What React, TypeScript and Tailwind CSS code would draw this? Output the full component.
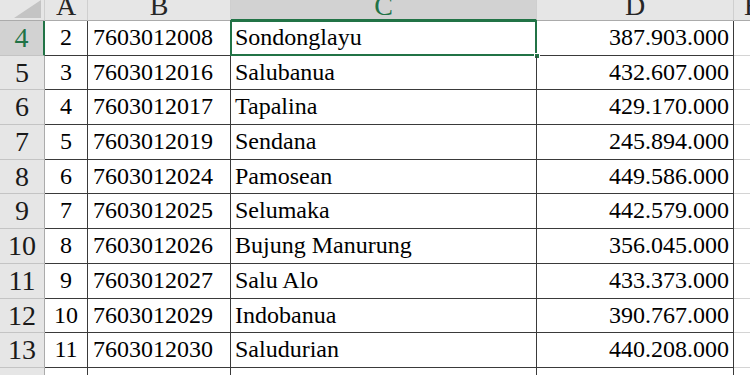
import React from 'react';

type Row = {
  num: number;
  a: string;
  b: string;
  c: string;
  d: string;
};

const rows: Row[] = [
  { num: 4, a: '2', b: '7603012008', c: 'Sondonglayu', d: '387.903.000' },
  { num: 5, a: '3', b: '7603012016', c: 'Salubanua', d: '432.607.000' },
  { num: 6, a: '4', b: '7603012017', c: 'Tapalina', d: '429.170.000' },
  { num: 7, a: '5', b: '7603012019', c: 'Sendana', d: '245.894.000' },
  { num: 8, a: '6', b: '7603012024', c: 'Pamosean', d: '449.586.000' },
  { num: 9, a: '7', b: '7603012025', c: 'Selumaka', d: '442.579.000' },
  { num: 10, a: '8', b: '7603012026', c: 'Bujung Manurung', d: '356.045.000' },
  { num: 11, a: '9', b: '7603012027', c: 'Salu Alo', d: '433.373.000' },
  { num: 12, a: '10', b: '7603012029', c: 'Indobanua', d: '390.767.000' },
  { num: 13, a: '11', b: '7603012030', c: 'Saludurian', d: '440.208.000' },
  { num: 14, a: '', b: '', c: '', d: '' },
];

const gridCols = 'grid grid-cols-[45px_43px_143px_306px_197px_38px]';

const headerCell = 'h-[21px] overflow-hidden border-r border-b border-r-[#cfcfcf] border-b-[#ababab] bg-[#e6e6e6] text-center text-[28px] leading-[11px] text-[#262626]';

const dataCell = 'h-[34.7px] overflow-hidden whitespace-nowrap border-r border-b border-[#3a3a3a] text-[24px] leading-[32px] text-black';

export default function App() {
  return (
    <div className="h-[375px] w-[750px] overflow-hidden bg-white font-['Liberation_Serif','Times_New_Roman',serif]">
      <div className="w-[772px]">
        {/* column headers */}
        <div className={gridCols}>
          <div className="relative h-[21px] border-r border-b border-r-[#cfcfcf] border-b-[#ababab] bg-[#e6e6e6]">
            <svg className="absolute right-[3px] bottom-[2px]" width="27" height="18" viewBox="0 0 27 18">
              <polygon points="27,0 27,18 0,18" fill="#c4c4c4" />
            </svg>
          </div>
          <div className={headerCell}>A</div>
          <div className={headerCell}>B</div>
          <div className="h-[21px] overflow-hidden border-r border-b-2 border-r-[#cfcfcf] border-b-[#217346] bg-[#d2d2d2] text-center text-[28px] leading-[11px] text-[#217346]">
            C
          </div>
          <div className={headerCell}>D</div>
          <div className={headerCell}>E</div>
        </div>

        {rows.map((row) => {
          const selected = row.num === 4;
          return (
            <div key={row.num} className={gridCols}>
              <div
                className={
                  selected
                    ? 'h-[34.7px] overflow-hidden border-r-2 border-b border-r-[#217346] border-b-[#c4c4c4] bg-[#d2d2d2] text-center text-[28px] leading-[34.7px] text-[#217346]'
                    : 'h-[34.7px] overflow-hidden border-r border-b border-r-[#ababab] border-b-[#c4c4c4] bg-[#e6e6e6] text-center text-[28px] leading-[34.7px] text-[#1a1a1a]'
                }
              >
                {row.num}
              </div>
              <div className={`${dataCell} text-center`}>{row.a}</div>
              <div className={`${dataCell} pl-[5px]`}>{row.b}</div>
              <div className={`${dataCell} relative overflow-visible pl-[4px]`}>
                {row.c}
                {selected ? (
                  <>
                    <div className="pointer-events-none absolute -top-px -left-px -right-px -bottom-px border-2 border-[#217346]" />
                    <div className="absolute -right-[4px] -bottom-[4px] h-[6px] w-[6px] border border-white bg-[#217346]" />
                  </>
                ) : null}
              </div>
              <div className={`${dataCell} pr-[4px] text-right`}>{row.d}</div>
              <div className="h-[34.7px] border-r border-b border-[#d4d4d4]" />
            </div>
          );
        })}
      </div>
    </div>
  );
}
